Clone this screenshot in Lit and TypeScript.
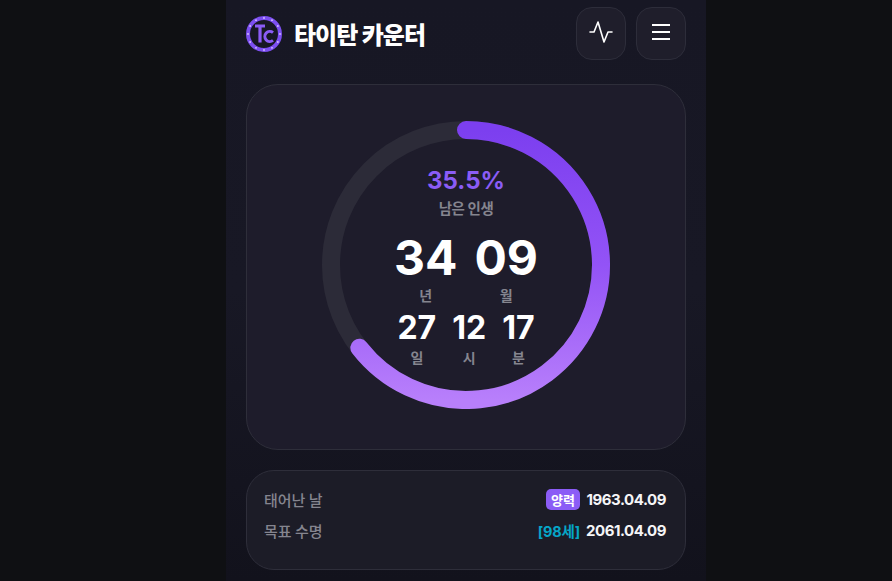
import { LitElement, html, css, svg } from "lit";
import { customElement } from "lit/decorators.js";

const dots = Array.from({ length: 12 }, (_, i) => {
  const a = (i * Math.PI) / 6;
  return svg`<circle cx=${18 + 16 * Math.cos(a)} cy=${18 + 16 * Math.sin(a)} r="0.9" fill="#d9c2ff"></circle>`;
});

function arc(cx: number, cy: number, r: number, frac: number) {
  const a = frac * 2 * Math.PI;
  const x = cx + r * Math.sin(a);
  const y = cy - r * Math.cos(a);
  return `M${cx} ${cy - r}A${r} ${r} 0 ${frac > 0.5 ? 1 : 0} 1 ${x} ${y}`;
}

@customElement("app-root")
export class AppRoot extends LitElement {
  static styles = css`
    :host { display: block; height: 581px; overflow: hidden; background: #0f1013; font-family: Inter, "Noto Sans CJK KR", sans-serif; }
    .page { box-sizing: border-box; width: 480px; height: 581px; margin-left: 226px; padding: 0 20px; background: linear-gradient(180deg, #171724 0%, #181825 50%, #12121c 100%); }
    .header { height: 84px; display: flex; justify-content: space-between; align-items: flex-start; }
    .brand { display: flex; align-items: center; gap: 12px; height: 67px; }
    .logo { width: 36px; height: 36px; display: block; }
    .title { font-family: "Noto Sans CJK KR", sans-serif; font-weight: 900; font-size: 24px; letter-spacing: -1px; color: #fff; }
    .actions { display: flex; gap: 10px; padding-top: 7px; }
    .btn { width: 50px; height: 53px; box-sizing: border-box; border-radius: 16px; border: 1px solid #2d2d3a; background: #1f1e2b; display: flex; align-items: center; justify-content: center; padding-bottom: 3px; }
    .card { box-sizing: border-box; height: 366px; border-radius: 32px; border: 1px solid #2e2e3a; background: #1e1c2b; display: flex; align-items: center; justify-content: center; padding-bottom: 4px; }
    .ring { position: relative; width: 288px; height: 288px; }
    .ring svg { display: block; }
    .center { position: absolute; inset: 0; display: flex; flex-direction: column; align-items: center; padding-top: 45px; box-sizing: border-box; }
    .pct { font-size: 24px; line-height: 30px; font-weight: 700; color: #8b5cf6; letter-spacing: 0; }
    .sub { font-family: "Noto Sans CJK KR", sans-serif; font-size: 14.5px; line-height: 20px; font-weight: 700; color: #85858f; margin-top: 2px; letter-spacing: -0.4px; }
    .row { display: flex; justify-content: center; }
    .big { gap: 17px; margin-top: 13px; }
    .small { gap: 16px; margin-top: 4px; }
    .unit { display: flex; flex-direction: column; align-items: center; }
    .big .n { font-size: 48px; line-height: 54px; font-weight: 700; color: #fff; }
    .small .n { font-size: 32px; line-height: 38px; font-weight: 700; color: #fff; }
    .u { font-size: 14px; line-height: 18px; font-weight: 700; color: #85858f; margin-top: 2px; }
    .info { box-sizing: border-box; height: 100px; margin-top: 20px; border-radius: 28px; border: 1px solid #2e2e3a; background: #1c1c27; padding: 16px 19px 0 17px; display: flex; flex-direction: column; gap: 7px; }
    .line { display: flex; justify-content: space-between; align-items: center; height: 24px; }
    .k { font-family: "Noto Sans CJK KR", sans-serif; font-size: 15px; font-weight: 500; color: #85858f; }
    .v { display: flex; align-items: center; gap: 6px; font-size: 15px; font-weight: 700; letter-spacing: -0.45px; color: #f5f5f7; }
    .tag { font-family: "Noto Sans CJK KR", sans-serif; font-size: 13px; font-weight: 700; line-height: 21px; height: 21px; padding: 0 5.5px; border-radius: 5px; background: #8b5cf6; color: #fff; letter-spacing: 0; }
    .age { font-size: 14.5px; font-weight: 700; color: #06a6c8; letter-spacing: -0.2px; font-family: Inter, "Noto Sans CJK KR", sans-serif; }
  `;

  render() {
    return html`<div class="page">
      <div class="header">
        <div class="brand">
          <svg class="logo" viewBox="0 0 36 36">
            <circle cx="18" cy="18" r="16" fill="none" stroke="#7c4ff0" stroke-width="4"></circle>
            ${dots}
            <path d="M9 10H19M14 10V26.5" fill="none" stroke="#8b5cf6" stroke-width="3.2"></path>
            <path d="M27 16.6A5 5 0 1 0 27 24.4" fill="none" stroke="#8b5cf6" stroke-width="3"></path>
          </svg>
          <span class="title">타이탄 카운터</span>
        </div>
        <div class="actions">
          <div class="btn">
            <svg width="24" height="24" viewBox="0 0 24 24" fill="none" stroke="#fff" stroke-width="1.6" stroke-linecap="round" stroke-linejoin="round">
              <path d="M1 12H5L9 2L15 22L19 12H23"></path>
            </svg>
          </div>
          <div class="btn">
            <svg width="18" height="16" viewBox="0 0 18 16" fill="none" stroke="#fff" stroke-width="2">
              <path d="M0 1H18M0 8H18M0 15H18"></path>
            </svg>
          </div>
        </div>
      </div>
      <div class="card">
        <div class="ring">
          <svg width="288" height="288" viewBox="0 0 288 288">
            <defs>
              <linearGradient id="g" gradientUnits="userSpaceOnUse" x1="144" y1="9" x2="144" y2="279">
                <stop offset="0" stop-color="#7c3fef"></stop>
                <stop offset="0.5" stop-color="#9353f6"></stop>
                <stop offset="1" stop-color="#b87ffb"></stop>
              </linearGradient>
            </defs>
            <circle cx="144" cy="144" r="135" fill="none" stroke="#2c2b38" stroke-width="18"></circle>
            <path d=${arc(144, 144, 135, 0.645)} fill="none" stroke="url(#g)" stroke-width="18" stroke-linecap="round"></path>
          </svg>
          <div class="center">
            <div class="pct">35.5%</div>
            <div class="sub">남은 인생</div>
            <div class="row big">
              <div class="unit"><span class="n">34</span><span class="u">년</span></div>
              <div class="unit"><span class="n">09</span><span class="u">월</span></div>
            </div>
            <div class="row small">
              <div class="unit"><span class="n">27</span><span class="u">일</span></div>
              <div class="unit"><span class="n">12</span><span class="u">시</span></div>
              <div class="unit"><span class="n">17</span><span class="u">분</span></div>
            </div>
          </div>
        </div>
      </div>
      <div class="info">
        <div class="line"><span class="k">태어난 날</span><span class="v"><span class="tag">양력</span>1963.04.09</span></div>
        <div class="line"><span class="k">목표 수명</span><span class="v"><span class="age">[98세]</span>2061.04.09</span></div>
      </div>
    </div>`;
  }
}
